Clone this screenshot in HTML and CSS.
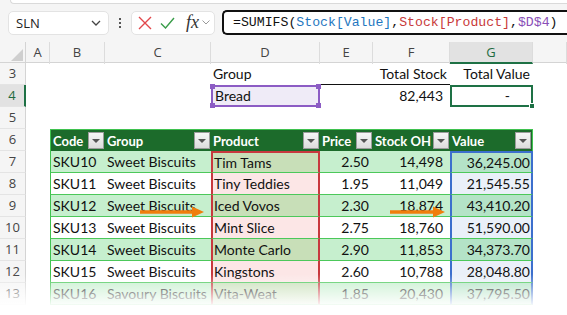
FILE: index.html
```html
<!DOCTYPE html>
<html lang="en">
<head>
    <meta charset="UTF-8">
    <title>SUMIFS on a stock table</title>
    <link rel="stylesheet" href="styles.css">
</head>
<body>
    <div class="toolbar">
        <div class="ribbon-edge"></div>
        <div class="formula-bar">
            <div class="name-box">
                <span>SLN</span>
                <svg width="10" height="6" viewBox="0 0 10 6"><path d="M1 1l4 4 4-4" fill="none" stroke="#444" stroke-width="1.3"/></svg>
            </div>
            <div class="grip"><i></i><i></i><i></i></div>
            <div class="fx-tools">
                <svg width="14" height="14" viewBox="0 0 14 14"><path d="M1 1l12 12M13 1L1 13" stroke="#e2474b" stroke-width="1.4"/></svg>
                <svg width="15" height="12" viewBox="0 0 15 12"><path d="M1 6.5l4.5 4.5L14 1" fill="none" stroke="#3a9d4a" stroke-width="1.4"/></svg>
                <span class="fx">fx</span>
                <svg width="8" height="5" viewBox="0 0 8 5"><path d="M0.5 0.5l3.5 3.5 3.5-3.5" fill="none" stroke="#999" stroke-width="1"/></svg>
            </div>
            <div class="formula-input">=SUMIFS(<span class="ref-blue">Stock[Value]</span>,<span class="ref-red">Stock[Product]</span>,<span class="ref-purple">$D$4</span>)</div>
        </div>
    </div>

    <div class="sheet">
        <div class="row col-heads">
            <div class="corner"><svg width="12" height="12" viewBox="0 0 12 12"><path d="M12 0V12H0z" fill="#cfcfcf"/></svg></div>
            <div>A</div><div>B</div><div>C</div><div>D</div><div>E</div><div>F</div><div class="active-col">G</div><div></div>
        </div>

        <div class="row">
            <div class="rn">3</div>
            <div></div><div></div><div></div>
            <div class="c">Group</div>
            <div class="underline"></div>
            <div class="c right underline">Total Stock</div>
            <div class="c right">Total Value</div>
            <div></div>
        </div>

        <div class="row">
            <div class="rn active-row">4</div>
            <div></div><div></div><div></div>
            <div class="c criteria">Bread<i class="h tl"></i><i class="h tr"></i><i class="h bl"></i><i class="h br"></i></div>
            <div></div>
            <div class="c right pad-num">82,443</div>
            <div class="c right selected">-<i class="fill-handle"></i></div>
            <div></div>
        </div>

        <div class="row">
            <div class="rn">5</div>
        </div>

        <div class="row">
            <div class="rn">6</div>
            <div></div>
            <div class="th first">Code<b class="filter"></b></div>
            <div class="th">Group<b class="filter"></b></div>
            <div class="th">Product<b class="filter"></b></div>
            <div class="th">Price<b class="filter"></b></div>
            <div class="th">Stock OH<b class="filter"></b></div>
            <div class="th last">Value<b class="filter"></b></div>
            <div></div>
        </div>

        <div id="rows"></div>

        <svg class="arrow arrow-left" width="64" height="12" viewBox="0 0 64 12"><path d="M0 6h54" stroke="#f07e0c" stroke-width="3.5"/><path d="M52 0.5L64 6 52 11.5z" fill="#f07e0c"/></svg>
        <svg class="arrow arrow-right" width="55" height="12" viewBox="0 0 55 12"><path d="M0 6h45" stroke="#f07e0c" stroke-width="3.5"/><path d="M43 0.5L55 6 43 11.5z" fill="#f07e0c"/></svg>
        <div class="fade"></div>
    </div>

    <script>
        const stock = [
            ['SKU10', 'Sweet Biscuits', 'Tim Tams', '2.50', '14,498', '36,245.00'],
            ['SKU11', 'Sweet Biscuits', 'Tiny Teddies', '1.95', '11,049', '21,545.55'],
            ['SKU12', 'Sweet Biscuits', 'Iced Vovos', '2.30', '18,874', '43,410.20'],
            ['SKU13', 'Sweet Biscuits', 'Mint Slice', '2.75', '18,760', '51,590.00'],
            ['SKU14', 'Sweet Biscuits', 'Monte Carlo', '2.90', '11,853', '34,373.70'],
            ['SKU15', 'Sweet Biscuits', 'Kingstons', '2.60', '10,788', '28,048.80'],
            ['SKU16', 'Savoury Biscuits', 'Vita-Weat', '1.85', '20,430', '37,795.50']
        ];

        const rows = document.getElementById('rows');

        stock.forEach((item, i) => {
            const row = document.createElement('div');
            row.className = 'row data' + (i % 2 === 0 ? ' band' : '') + (i === 0 ? ' top' : '');
            row.innerHTML = `
                <div class="rn">${i + 7}</div>
                <div></div>
                <div class="c td first">${item[0]}</div>
                <div class="c td">${item[1]}</div>
                <div class="c td prod">${item[2]}</div>
                <div class="c td right pad-price">${item[3]}</div>
                <div class="c td right pad-num">${item[4]}</div>
                <div class="c td right val">${item[5]}</div>
                <div></div>`;
            rows.appendChild(row);
        });
    </script>
</body>
</html>
```

FILE: styles.css
```css
* {
    margin: 0;
    padding: 0;
    box-sizing: border-box;
}

body {
    width: 567px;
    height: 315px;
    overflow: hidden;
    background: #fff;
    font-family: 'Lato', sans-serif;
    font-size: 14px;
    color: #111;
}

.toolbar {
    background: #f5f5f5;
    height: 42px;
}

.ribbon-edge {
    height: 4px;
    margin-left: 10px;
    background: #fff;
    border: 1px solid #dadada;
    border-top: none;
    border-right: none;
    border-radius: 0 0 0 5px;
}

.formula-bar {
    display: flex;
    align-items: center;
    height: 25px;
    margin-top: 6px;
    padding-left: 8px;
}

.name-box {
    width: 101px;
    height: 24px;
    display: flex;
    align-items: center;
    justify-content: space-between;
    padding: 0 7px 0 7px;
    background: #fff;
    border: 1px solid #e3e3e3;
    border-radius: 5px;
    font-family: 'Open Sans', sans-serif;
    font-size: 13px;
    color: #222;
}

.grip {
    width: 22px;
    display: flex;
    flex-direction: column;
    align-items: center;
    gap: 2px;
}

.grip i {
    width: 2px;
    height: 2px;
    background: #555;
}

.fx-tools {
    width: 84px;
    height: 24px;
    display: flex;
    align-items: center;
    gap: 8px;
    padding-left: 6px;
    background: #fff;
    border: 1px solid #e3e3e3;
    border-radius: 5px;
}

.fx {
    font-family: 'Liberation Serif', serif;
    font-style: italic;
    font-size: 18px;
    color: #333;
    margin-left: 3px;
    margin-right: -5px;
}

.formula-input {
    flex: 1;
    height: 25px;
    margin-left: 7px;
    padding-left: 9px;
    border: 2px solid #111;
    border-right: none;
    border-radius: 5px 0 0 5px;
    background: #fff;
    font-family: 'Liberation Mono', monospace;
    font-size: 13.2px;
    line-height: 21px;
    color: #111;
    white-space: nowrap;
}

.ref-blue { color: #1f77c0; }
.ref-red { color: #c83a3a; }
.ref-purple { color: #8a4fb8; }

.sheet {
    position: relative;
}

.row {
    display: grid;
    grid-template-columns: 26px 24px 55px 106px 109px 53px 77px 83px 1fr;
    height: 22px;
}

.row > div {
    position: relative;
    white-space: nowrap;
    overflow: visible;
}

.col-heads {
    height: 21px;
    background: #f5f5f5;
    border-bottom: 1px solid #d4d4d4;
}

.col-heads > div {
    border-right: 1px solid #dcdcdc;
    text-align: center;
    font-family: 'Open Sans', sans-serif;
    font-size: 13px;
    line-height: 20px;
    color: #444;
}

.col-heads .corner {
    display: flex;
    justify-content: flex-end;
    align-items: flex-end;
    padding: 0 2px 3px 0;
    border-right: 1px solid #d4d4d4;
}

.col-heads .active-col {
    background: #e2e2e2;
    border-bottom: 2px solid #1e7145;
    color: #1e6b40;
}

.rn {
    background: #f5f5f5;
    border-right: 1px solid #d4d4d4;
    border-bottom: 1px solid #e4e4e4;
    text-align: center;
    font-family: 'Open Sans', sans-serif;
    font-size: 13px;
    line-height: 21px;
    color: #444;
}

.rn.active-row {
    background: #e2e2e2;
    border-right: 2px solid #1e7145;
    color: #1e6b40;
}

.c {
    padding-left: 2px;
    line-height: 21px;
}

.right {
    text-align: right;
    padding-right: 3px;
}

.pad-num { padding-right: 7px; }
.pad-price { padding-right: 4px; }

.underline {
    border-bottom: 1px solid #111;
}

.criteria {
    background: #efebf7;
    border: 2px solid #8c5cc4;
    line-height: 18px;
}

.h {
    position: absolute;
    width: 5px;
    height: 5px;
    background: #8c5cc4;
}

.h.tl { left: -3px; top: -3px; }
.h.tr { right: -3px; top: -3px; }
.h.bl { left: -3px; bottom: -3px; }
.h.br { right: -3px; bottom: -3px; }

.selected {
    border: 2px solid #1e7145;
    line-height: 18px;
    padding-right: 21px;
}

.fill-handle {
    position: absolute;
    right: -4px;
    bottom: -4px;
    width: 6px;
    height: 6px;
    background: #1e7145;
    border: 1px solid #fff;
}

.th {
    display: flex;
    align-items: center;
    justify-content: space-between;
    padding: 0 1px 0 2px;
    background: #1c6b2b;
    border-top: 1px solid #3fc24f;
    color: #fff;
    font-size: 13px;
    font-weight: bold;
}

.th.first { border-left: 1px solid #3fc24f; }
.th.last { border-right: 1px solid #3fc24f; }

.filter {
    position: relative;
    flex: none;
    width: 16px;
    height: 17px;
    background: linear-gradient(#f6f6f6, #dcdcdc);
    border: 1px solid #9c9c9c;
}

.filter::after {
    content: '';
    position: absolute;
    left: 3px;
    top: 6px;
    border-left: 4px solid transparent;
    border-right: 4px solid transparent;
    border-top: 4px solid #555;
}

.td {
    border-bottom: 1px solid #4cc85a;
}

.td.first {
    border-left: 1px solid #3fc24f;
}

.band .td { background: #c6efce; }

.td.prod {
    background: #fce6e6;
    border-left: 2px solid #c8383e;
    border-right: 2px solid #c8383e;
    padding-left: 1px;
}

.band .td.prod { background: #c8dfb8; }

.td.val {
    background: #eaf0f9;
    border-left: 2px solid #3c6fcd;
    border-right: 2px solid #3c6fcd;
    padding-right: 1px;
}

.band .td.val { background: #b4e3c7; }

.top .td.prod,
.top .td.val {
    border-top: 2px solid;
    line-height: 19px;
}

.top .td.prod { border-top-color: #c8383e; }
.top .td.val { border-top-color: #3c6fcd; }

.arrow {
    position: absolute;
    top: 164px;
}

.arrow-left { left: 140px; }
.arrow-right { left: 390px; }

.fade {
    position: absolute;
    left: 0;
    right: 0;
    top: 232px;
    height: 60px;
    background: linear-gradient(rgba(255, 255, 255, 0), #fff 55%);
}
```
